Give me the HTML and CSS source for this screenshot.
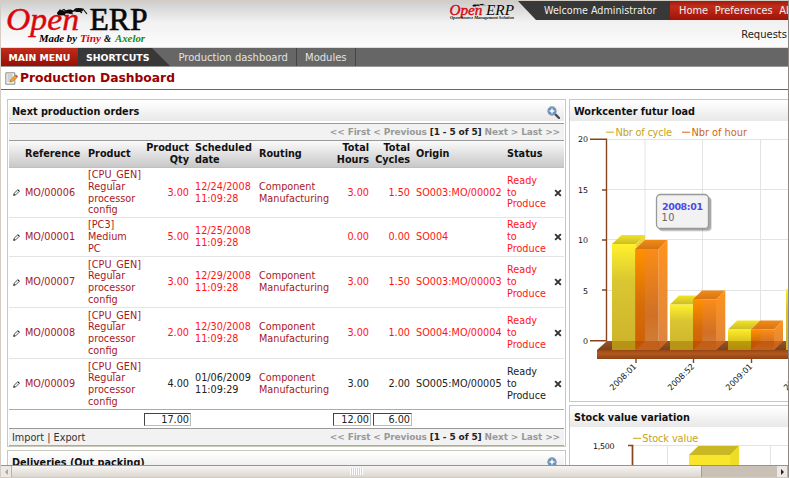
FILE: index.html
```html
<!DOCTYPE html>
<html lang="en">
<head>
<meta charset="utf-8">
<title>Production Dashboard</title>
<link rel="stylesheet" href="styles.css">
</head>
<body>
<svg class="defs" width="0" height="0">
  <defs>
    <g id="ant" fill="#080808">
      <ellipse cx="61.500" cy="13" rx="4.300" ry="2.500"/><ellipse cx="69" cy="11.500" rx="4.200" ry="2" transform="rotate(-8 69 11.7)"/><ellipse cx="78.500" cy="10" rx="4.500" ry="2"/>
      <path d="M63 13 60 10 57.500 14M67 12 64 9.500 61 11M71 12l6-2M73 11l4-2 5 4M80 9l3 0 4 5M69 13l4 1" fill="none" stroke="#111" stroke-width="1.2"/>
    </g>
    <g id="lens">
      <path d="M7.6 7.6 12 12" stroke="#444b52" stroke-width="2.3" stroke-linecap="round"/>
      <circle cx="5" cy="5" r="4.1" fill="#5c93cb" stroke="#8d979f" stroke-width="1.1"/>
      <path d="M5 2.6v4.8M2.6 5h4.8" stroke="#fff" stroke-width="1.4"/>
    </g>
    <g id="pencil">
      <path d="M.7 6.4 1.2 4.2 4.8.8 6.3 2.2 2.8 5.8Z" fill="#fff" stroke="#222" stroke-width=".8"/>
      <path d="M.5 6.5 1 5l1 1ZM4.6.8l1.2 0 .7.9-.4.8Z" fill="#111"/>
    </g>
    <linearGradient id="yel" x2="0" y2="1"><stop offset="0" stop-color="#fff12b"/><stop offset=".35" stop-color="#dac631"/><stop offset="1" stop-color="#cdb22c"/></linearGradient>
    <linearGradient id="yels" x2="0" y2="1"><stop offset="0" stop-color="#fcec2d"/><stop offset="1" stop-color="#c4a50e"/></linearGradient>
    <linearGradient id="ytop" x2="0" y2="1"><stop offset="0" stop-color="#f2e422"/><stop offset="1" stop-color="#cbbd29"/></linearGradient>
    <linearGradient id="ora" x2="0" y2="1"><stop offset="0" stop-color="#ff9100"/><stop offset=".55" stop-color="#d66d08"/><stop offset="1" stop-color="#cc6006"/></linearGradient>
    <linearGradient id="oraf" x2="0" y2="1"><stop offset="0" stop-color="#fa8c17"/><stop offset=".65" stop-color="#d17025"/><stop offset="1" stop-color="#d0803a"/></linearGradient>
    <linearGradient id="oras" x2="0" y2="1"><stop offset="0" stop-color="#ff931b"/><stop offset="1" stop-color="#db8442"/></linearGradient>
    <linearGradient id="otop" x2="0" y2="1"><stop offset="0" stop-color="#f18a16"/><stop offset="1" stop-color="#d67415"/></linearGradient>
    <linearGradient id="base" x2="0" y2="1"><stop offset="0" stop-color="#984713"/><stop offset=".4" stop-color="#b3581c"/><stop offset="1" stop-color="#8a4217"/></linearGradient>
    <linearGradient id="floor" x2="0" y2="1"><stop offset="0" stop-color="#9b5422"/><stop offset="1" stop-color="#77421f"/></linearGradient>
  </defs>
</svg>
<div class="window">
  <header class="top">
    <svg class="logo" width="150" height="46" viewBox="1 1 150 46">
      <text x="6" y="30" class="lo red" font-size="31" textLength="73" lengthAdjust="spacingAndGlyphs">Open</text>
      <text x="89.500" y="30.300" class="lo heavy" font-size="32" textLength="58" lengthAdjust="spacingAndGlyphs">ERP</text>
      <use href="#ant"/>
      <g class="made"><text x="39" y="41.500" textLength="38" lengthAdjust="spacingAndGlyphs">Made by</text><text x="80" y="41.500" class="red" textLength="21" lengthAdjust="spacingAndGlyphs">Tiny</text><text x="104" y="41.500" textLength="7" lengthAdjust="spacingAndGlyphs">&amp;</text><text x="115" y="41.500" class="green" textLength="30" lengthAdjust="spacingAndGlyphs">Axelor</text></g>
    </svg>
    <svg class="logo-small" width="68" height="20" viewBox="449 1 68 20">
      <text x="449.500" y="14.500" class="lo red" font-size="15" textLength="33" lengthAdjust="spacingAndGlyphs">Open</text>
      <text x="486" y="14.500" class="lo it" font-size="15.500" textLength="28" lengthAdjust="spacingAndGlyphs">ERP</text>
      <use href="#ant" transform="translate(448 1) scale(.43 .36)"/>
      <text x="450" y="18.700" class="lo bold" font-size="4.5" textLength="64" lengthAdjust="spacingAndGlyphs">Open Source Management Solution</text>
    </svg>
    <div class="user">
      <div class="bar"><span class="welcome">Welcome Administrator</span><nav class="links"><a>Home</a><a>Preferences</a><a>About</a></nav></div>
      <div class="requests">Requests</div>
    </div>
  </header>
  <nav class="menu"><a class="main">MAIN MENU</a><a class="short">SHORTCUTS</a><a class="item first">Production dashboard</a><a class="item">Modules</a></nav>
  <h1 class="title">
    <svg width="13" height="13" viewBox="0 0 13 13"><path d="M.8.8h9v11.4h-9z" fill="#f3f3f3" stroke="#8b8b8b"/><path d="M2.5 3h5M2.5 5h5M2.5 7h3M2.5 9h3" stroke="#999" stroke-width=".8"/><path d="m5 10 .8-2.6 4.4-4 2 2-4.5 4Z" fill="#f6a623" stroke="#9b6617" stroke-width=".6"/><path d="m10 3.5 1-.9 2 1.9-1 .9Z" fill="#c94a4a"/></svg>
    <span>Production Dashboard</span>
  </h1>
  <main class="board">
    <div class="col left">
      <section class="panel orders">
        <h2><span>Next production orders</span><svg width="13" height="13" viewBox="0 0 13 13"><use href="#lens"/></svg></h2>
        <div class="pager"><span></span><span class="pages">&lt;&lt; First &lt; Previous <b>[1 - 5 of 5]</b> Next &gt; Last &gt;&gt;</span></div>
        <table>
          <colgroup><col class="c1"><col class="c2"><col class="c3"><col class="c4"><col class="c5"><col class="c6"><col class="c7"><col class="c8"><col class="c9"><col class="c10"><col class="c11"></colgroup>
          <thead><tr><th></th><th>Reference</th><th>Product</th><th class="n">Product<br>Qty</th><th>Scheduled<br>date</th><th>Routing</th><th class="n">Total<br>Hours</th><th class="n">Total<br>Cycles</th><th>Origin</th><th>Status</th><th></th></tr></thead>
          <tbody>
            <tr class="top-row"><td><svg class="pen" viewBox="0 0 7 7"><use href="#pencil"/></svg></td><td class="k">MO/00006</td><td class="k">[CPU_GEN]<br>Regular<br>processor<br>config</td><td class="n">3.00</td><td>12/24/2008<br>11:09:28</td><td class="k">Component<br>Manufacturing</td><td class="n">3.00</td><td class="n">1.50</td><td>SO003:MO/00002</td><td>Ready<br>to<br>Produce</td><td><svg class="del" viewBox="0 0 7 7"><path d="M1 1l5 5M6 1 1 6"/></svg></td></tr>
            <tr class="low"><td><svg class="pen" viewBox="0 0 7 7"><use href="#pencil"/></svg></td><td class="k">MO/00001</td><td class="k">[PC3]<br>Medium<br>PC</td><td class="n">5.00</td><td>12/25/2008<br>11:09:28</td><td></td><td class="n">0.00</td><td class="n">0.00</td><td>SO004</td><td>Ready<br>to<br>Produce</td><td><svg class="del" viewBox="0 0 7 7"><path d="M1 1l5 5M6 1 1 6"/></svg></td></tr>
            <tr><td><svg class="pen" viewBox="0 0 7 7"><use href="#pencil"/></svg></td><td class="k">MO/00007</td><td class="k">[CPU_GEN]<br>Regular<br>processor<br>config</td><td class="n">3.00</td><td>12/29/2008<br>11:09:28</td><td class="k">Component<br>Manufacturing</td><td class="n">3.00</td><td class="n">1.50</td><td>SO003:MO/00003</td><td>Ready<br>to<br>Produce</td><td><svg class="del" viewBox="0 0 7 7"><path d="M1 1l5 5M6 1 1 6"/></svg></td></tr>
            <tr><td><svg class="pen" viewBox="0 0 7 7"><use href="#pencil"/></svg></td><td class="k">MO/00008</td><td class="k">[CPU_GEN]<br>Regular<br>processor<br>config</td><td class="n">2.00</td><td>12/30/2008<br>11:09:28</td><td class="k">Component<br>Manufacturing</td><td class="n">3.00</td><td class="n">1.00</td><td>SO004:MO/00004</td><td>Ready<br>to<br>Produce</td><td><svg class="del" viewBox="0 0 7 7"><path d="M1 1l5 5M6 1 1 6"/></svg></td></tr>
            <tr class="ok"><td><svg class="pen" viewBox="0 0 7 7"><use href="#pencil"/></svg></td><td class="k">MO/00009</td><td class="k">[CPU_GEN]<br>Regular<br>processor<br>config</td><td class="n">4.00</td><td>01/06/2009<br>11:09:29</td><td class="k">Component<br>Manufacturing</td><td class="n">3.00</td><td class="n">2.00</td><td>SO005:MO/00005</td><td>Ready<br>to<br>Produce</td><td><svg class="del" viewBox="0 0 7 7"><path d="M1 1l5 5M6 1 1 6"/></svg></td></tr>
          </tbody>
          <tfoot><tr><td></td><td></td><td></td><td class="n"><span class="sum">17.00</span></td><td></td><td></td><td class="n"><span class="sum">12.00</span></td><td class="n"><span class="sum">6.00</span></td><td></td><td></td><td></td></tr></tfoot>
        </table>
        <div class="pager bottom"><span>Import | Export</span><span class="pages">&lt;&lt; First &lt; Previous <b>[1 - 5 of 5]</b> Next &gt; Last &gt;&gt;</span></div>
      </section>
      <section class="panel">
        <h2><span>Deliveries (Out packing)</span><svg width="13" height="13" viewBox="0 0 13 13"><use href="#lens"/></svg></h2>
      </section>
    </div>
    <div class="col right">
      <section class="panel load">
        <h2><span>Workcenter futur load</span></h2>
        <svg class="chart" width="219" height="280" viewBox="570 121 219 280">
          <path d="M607 139.5H789M607 189.5H789M607 239.5H789M607 290.5H789M645 139V341M702.5 139V341M760.5 139V341" stroke="#e3e3e3" fill="none"/>
          <path d="M607 341H789V350H597Z" fill="url(#floor)"/>
          <path d="M597 350H789V359H597Z" fill="url(#base)"/>
          <path d="M590 139.2H606.5V341.5M602 190H606M602 240H606M602 290H606M590 340.7H606.5M636 359V363M693.5 359V363M751.5 359V363" stroke="#86451c" stroke-width="1.4" fill="none"/>
          <path d="M612 244 621.500 235H645L635.500 244Z" fill="url(#ytop)"/><path d="M635.500 244 645 235V341L635.500 350Z" fill="#ead53a"/><path d="M612 244H635.500V350H612Z" fill="url(#yel)"/>
          <path d="M635.300 249 645 240H667.500L658.700 249Z" fill="url(#otop)"/><path d="M658.700 249 667.500 240V341L658.700 350Z" fill="url(#oras)"/><path d="M635.300 249H658.700V350H635.300Z" fill="url(#oraf)"/><path d="M635.300 249H645V341L635.300 350Z" fill="url(#ora)"/>
          <path d="M670 304.500 679 295.500H702L693 304.500Z" fill="url(#ytop)"/><path d="M670 304.500H693.200V350H670Z" fill="url(#yel)"/>
          <path d="M693 299.500 702 290.500H725.300L716 299.500Z" fill="url(#otop)"/><path d="M716 299.500 725.300 290.500V341L716 350Z" fill="url(#oras)"/><path d="M693 299.500H716V350H693Z" fill="url(#oraf)"/><path d="M693 299.500H702.500V341L693 350Z" fill="url(#ora)"/>
          <path d="M728 329.500 737 320.500H760L751 329.500Z" fill="url(#ytop)"/><path d="M728 329.500H751.200V350H728Z" fill="url(#yels)"/>
          <path d="M751 329.500 760 320.500H783L774 329.500Z" fill="url(#otop)"/><path d="M774 329.500 783 320.500V341L774 350Z" fill="url(#oras)"/><path d="M751 329.500H774V350H751Z" fill="url(#oraf)"/><path d="M751 329.500H760.500V341L751 350Z" fill="url(#ora)"/>
          <path d="M786 290 789 287.500V350H786Z" fill="url(#yel)"/>
          <g opacity=".5"><path d="M612 341H635.500V350H612ZM670 341H693V350H670ZM728 341H751V350H728Z" fill="#a27500"/><path d="M635.500 341H667L658.700 350H635.500ZM693 341H725L716 350H693ZM751 341H783L774 350H751Z" fill="#b64400"/></g>
          <path d="M606 132.200H614" stroke="#c9a91c"/><path d="M682 132.200H690" stroke="#d4681c"/>
          <text x="615.500" y="135.500" class="lg y" textLength="56.500">Nbr of cycle</text><text x="691.500" y="135.500" class="lg o" textLength="55.500">Nbr of hour</text>
          <g class="ax"><text x="588" y="141.800">20</text><text x="588" y="192.800">15</text><text x="588" y="243">10</text><text x="588" y="293.500">5</text><text x="588" y="343.700">0</text></g>
          <g class="tick"><text transform="translate(637 367) rotate(-45)" textLength="34">2008:01</text><text transform="translate(695 367) rotate(-45)" textLength="34">2008:52</text><text transform="translate(753 367) rotate(-45)" textLength="34">2009:01</text><text transform="translate(811 367) rotate(-45)" textLength="34">2009:02</text></g>
          <rect x="659" y="197.500" width="53" height="34" rx="4" fill="#000" opacity=".12"/><rect x="658" y="196.500" width="53" height="34" rx="4" fill="#000" opacity=".25"/>
          <rect x="656.500" y="194.500" width="52" height="34" rx="4" fill="#f2f2f2" stroke="#999" stroke-width="1.300"/>
          <text x="662" y="209.500" class="tip" textLength="41">2008:01</text><text x="661.500" y="220.500" class="val" textLength="13">10</text>
        </svg>
      </section>
      <section class="panel">
        <h2><span>Stock value variation</span></h2>
        <svg class="chart" width="219" height="50" viewBox="570 427 219 50">
          <path d="M633 445.500H789M667.500 445V478M770.500 445V478" stroke="#e3e3e3" fill="none"/>
          <path d="M628 445.500H632.500V478" fill="none" stroke="#86451c" stroke-width="1.700"/>
          <path d="M689 455 698.500 446H739V478H689Z" fill="#f8e52c"/><path d="M689 455 698.500 446H739L730 455Z" fill="#c9b824"/><path d="M730 455 739 446V478H730Z" fill="#efdc27"/>
          <path d="M633 438.300H641" stroke="#c9a91c"/><text x="642.300" y="441.500" class="lg y" textLength="56">Stock value</text><g class="ax"><text x="614.500" y="448.500" textLength="21.500">1,500</text></g>
        </svg>
      </section>
    </div>
  </main>
  <div class="scroll"><span class="arrow"><svg width="5" height="6" viewBox="0 0 5 6"><path d="M4 0V6L1 3Z" fill="#aaa49c"/></svg></span><span class="thumb"><i class="grip"></i></span><span class="track"></span><span class="arrow"><svg width="5" height="6" viewBox="0 0 5 6"><path d="M1 0V6L4 3Z" fill="#222"/></svg></span></div>
</div>
</body>
</html>
```
FILE: styles.css
```css
* { box-sizing: border-box; }
body { margin: 0; background: #fff; font: 9.7px/11.7px "DejaVu Sans", sans-serif; color: #333; }
.defs { position: absolute; }
.window { display: flex; flex-direction: column; width: 789px; height: 478px; overflow: hidden; border: 1px solid #d4cdc4; border-right-color: #8d8883; border-bottom-color: #cfcac4; }
svg { flex: none; display: block; }

.top { display: flex; flex: none; height: 47px; background: linear-gradient(#cdcdcd, #f1f1f1 45%, #fcfcfc); border-bottom: 1px solid #ddd; }
.lo { font-family: "Liberation Serif", serif; fill: #080808; }
.heavy { stroke: #080808; stroke-width: .6px; }
.lo.red { stroke: #d9060c; stroke-width: .4px; }
.red, .lo.red, .made .red { font-style: italic; fill: #d9060c; }
.it { font-style: italic; }
.bold, .made { font-weight: bold; font-style: italic; font-family: "Liberation Serif", serif; }
.made { font-size: 11px; }
.made .green { fill: #16881c; }
.logo-small { margin-left: 298px; }
.user { width: 270px; margin-left: auto; }
.bar { display: flex; height: 19px; line-height: 19px; white-space: nowrap; color: #eee; }
.welcome { flex: none; width: 152px; padding-left: 26px; background: #383838; clip-path: polygon(0 0, 100% 0, 100% 100%, 18px 100%); font-size: 9.600px; }
.links { display: flex; gap: 6.500px; flex: 1; padding-left: 9px; overflow: hidden; background: linear-gradient(#a41a0c, #c12d1b 30%, #a01207); font-size: 9.900px; }
.requests { padding: 9px 1px 0 0; text-align: right; font-size: 10px; color: #222; }

.menu { display: flex; flex: none; height: 19px; line-height: 19px; background: #666; border-bottom: 1px solid #999; color: #e2e2e2; font-size: 10px; white-space: nowrap; }
.main { width: 77px; padding-left: 7.500px; background: linear-gradient(#bf2c1b, #980f05); color: #fff; font-weight: bold; font-size: 9.300px; }
.short { width: 93px; padding-left: 8px; background: #383838; color: #fff; font-weight: bold; font-size: 9.400px; clip-path: polygon(0 0, 74px 0, 92px 100%, 0 100%); }
.item { padding: 0 8px; border-right: 1px solid #444; }
.item.first { width: 126px; padding-left: 7.500px; }

.title { display: flex; align-items: center; gap: 2px; flex: none; height: 23px; margin: 0; padding-left: 4px; border-bottom: 1px solid #666; color: #900; font-size: 12.300px; line-height: 23px; }
.board { display: flex; flex: 1; gap: 3px; min-height: 0; overflow: hidden; padding: 9px 0 0 6px; }
.col { display: flex; flex-direction: column; flex: none; gap: 3px; }
.left { width: 559px; }
.right { width: 221px; }
.panel { flex: none; border: 1px solid #c9c9bb; padding: 1px; overflow: hidden; }
.orders { height: 348px; }
.load { height: 303px; }
.right .panel { padding: 1px 0; }
.panel h2 { display: flex; justify-content: space-between; align-items: center; height: 20px; margin: 0; padding: 2px 4px 0 3px; background: linear-gradient(#fff, #e8e8e8); color: #111; font-size: 9.700px; }
.right .panel h2 { padding-left: 4px; }
.chart { overflow: hidden; }

.pager { display: flex; justify-content: space-between; height: 17px; margin-top: 2px; padding: 0 4px 0 3px; line-height: 17px; background: #f2f2f2; border-top: 1px solid #999; }
.pager.bottom { height: 18px; margin-top: 0; border-bottom: 1px solid #aaa; line-height: 17px; }
.pages { color: #999; font-weight: bold; font-size: 9px; letter-spacing: -.13px; }
.pages b { color: #222; }

table { width: 555px; table-layout: fixed; border-collapse: separate; border-spacing: 0; color: #ff1414; }
.c1 { width: 13px; } .c2 { width: 63px; } .c3 { width: 57px; } .c4 { width: 50px; } .c5 { width: 64px; } .c6 { width: 74px; } .c7 { width: 42px; } .c8 { width: 41px; } .c9 { width: 91px; } .c10 { width: 48px; } .c11 { width: 12px; }
th, td { padding: 0 3px; text-align: left; vertical-align: middle; white-space: nowrap; }
thead th { height: 28px; background: linear-gradient(#fafafa, #c8c8c8); border-top: 1px solid #999; border-bottom: 1px solid #c0c0c0; color: #111; font-size: 9.700px; }
tbody td { height: 51px; border-bottom: 1px solid #e4e4e4; }
.top-row td { height: 50px; }
.low td { height: 39px; }
td.k { color: #a8181c; }
.ok td { color: #222; border-bottom: 1px solid #aaa; }
.ok td.k { color: #a8181c; }
th.n, td.n { text-align: right; }
.pen { width: 7px; height: 7px; margin-left: 1px; }
.del { width: 8px; height: 8px; margin-left: -1px; stroke: #333; stroke-width: 1.700; }
tfoot td { height: 18px; padding: 0 1px; color: #222; }
.sum { display: block; height: 13px; padding: 0 1px; border: 1px solid #bbb; border-top-color: #444; border-left-color: #444; }
tfoot .n:nth-child(4) { padding-left: 2px; }
tfoot .n:nth-child(7) { padding-left: 3px; }

.lg { font-size: 9.800px; }
.y { fill: #c4a31a; }
.o { fill: #cf6514; }
.ax { font-size: 7.900px; text-anchor: end; fill: #111; }
.tick { font-size: 8.200px; text-anchor: end; fill: #222; }
.tip { font-size: 9.500px; font-weight: bold; fill: #4b4be6; }
.val { font-size: 9.800px; fill: #666; }

.scroll { display: flex; flex: none; height: 12px; border-top: 1px solid #99928b; background: #c9c0b6; }
.arrow { display: flex; align-items: center; justify-content: center; width: 11px; background: #ece8e3; border-right: 1px solid #bbb3aa; }
.thumb { display: flex; align-items: center; justify-content: center; width: 690px; background: linear-gradient(#f7f5f3, #dcd6cf); border-right: 1px solid #a49d95; }
.grip { width: 13px; height: 7px; background: repeating-linear-gradient(90deg, #fff 0 1px, #d8d1c9 1px 2px); }
.track { flex: 1; }
```
